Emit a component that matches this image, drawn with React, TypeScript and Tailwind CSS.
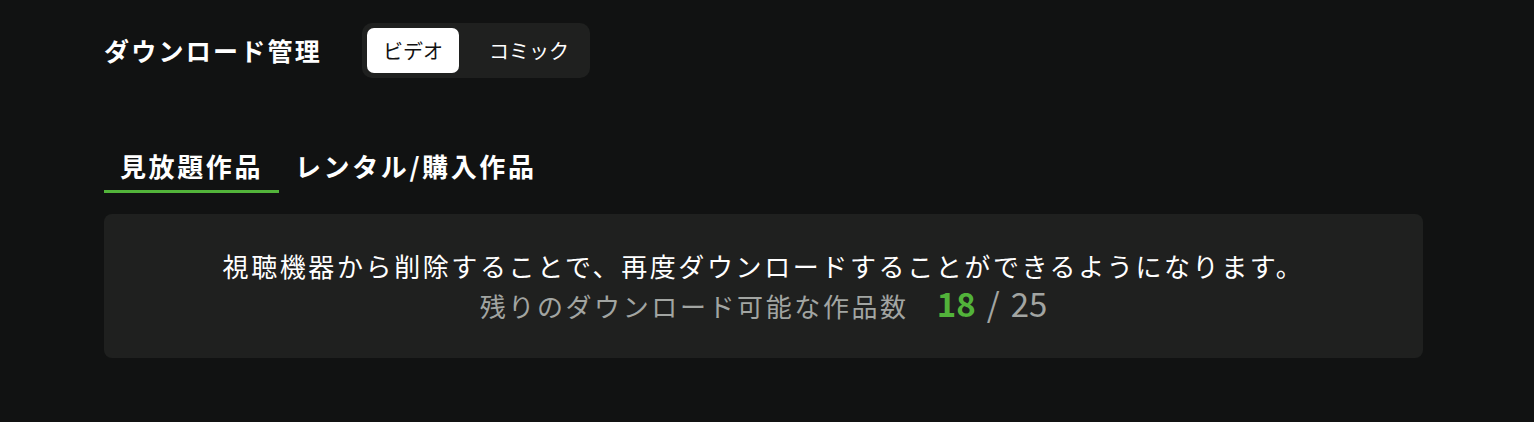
const font = {
  fontFamily: '"Noto Sans CJK JP", "Noto Sans", sans-serif',
};

function Segmented() {
  return (
    <div className="flex items-center gap-[14px] rounded-[10px] bg-[#1f201f] p-[5px]">
      <button className="rounded-[7px] bg-white px-4 py-2 text-[20px] leading-[29px] text-[#111]">
        ビデオ
      </button>
      <button className="px-4 py-2 text-[20px] leading-[29px] text-white">
        コミック
      </button>
    </div>
  );
}

export default function App() {
  return (
    <div className="min-h-[422px] bg-[#111212] px-[104px] pt-[23px]" style={font}>
      <div className="flex items-center gap-[40px]">
        <h1 className="text-[25px] font-bold tracking-[0.09em] text-white">
          ダウンロード管理
        </h1>
        <Segmented />
      </div>

      <div className="mt-[70px] flex">
        <div className="border-b-[3px] border-[#52b33a] px-4 pb-[6px] text-[26px] font-bold leading-[36px] tracking-[0.1em] text-white">
          見放題作品
        </div>
        <div className="border-b-[3px] border-transparent px-4 pb-[6px] text-[26px] font-bold leading-[36px] tracking-[0.1em] text-white">
          レンタル/購入作品
        </div>
      </div>

      <div className="mt-[21px] w-[1319px] rounded-[8px] bg-[#1f201f] py-8 text-center text-[26px] leading-[40px] tracking-[0.1em]">
        <p className="text-white">
          視聴機器から削除することで、再度ダウンロードすることができるようになります。
        </p>
        {/* line box tops aligned; 33px at 34px leading shares the 26px baseline */}
        <p className="flex h-[40px] items-start justify-center text-[#a2a5a2]">
          <span>残りのダウンロード可能な作品数</span>
          <span className="ml-[28px] text-[33px] leading-[34px] font-bold tracking-normal text-[#52b33a]">18</span>
          <span className="mx-[11px] text-[33px] leading-[34px] tracking-normal">/</span>
          <span className="text-[33px] leading-[34px] tracking-normal">25</span>
        </p>
      </div>
    </div>
  );
}
